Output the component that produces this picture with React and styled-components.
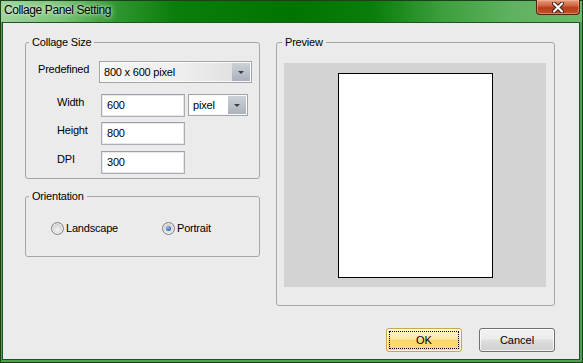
import React from 'react';
import styled, { createGlobalStyle } from 'styled-components';

const Global = createGlobalStyle`
  html, body { margin: 0; padding: 0; background: #fff; }
  body {
    width: 583px; height: 363px; overflow: hidden;
    font-family: "Liberation Sans", Arial, sans-serif;
  }
  * { box-sizing: border-box; }
`;

const Window = styled.div`
  width: 583px;
  height: 363px;
  display: flex;
  flex-direction: column;
  background: #4e9f4e;
  border: 1px solid #1c3f1c;
`;

const TitleBar = styled.div`
  height: 21px;
  flex: none;
  display: flex;
  align-items: flex-start;
  background: linear-gradient(90deg, #9ed39b 0%, #7cc479 10%, #2f962f 20%, #0b7d0b 30%, #007400 50%, #0a7d0a 64%, #3d9f3d 76%, #5fb25f 88%, #6ab96a 100%);
`;

const TitleText = styled.div`
  padding: 2px 0 0 3px;
  font-size: 12px;
  line-height: 15px;
  letter-spacing: -0.4px;
  color: #000;
  text-shadow: 0 0 6px rgba(225, 245, 225, 0.95), 0 0 3px rgba(225, 245, 225, 0.9);
`;

const CloseButton = styled.div`
  margin-left: auto;
  margin-right: 2px;
  margin-top: -1px;
  width: 44px;
  height: 15px;
  border: 1px solid #4f2417;
  border-top: none;
  border-radius: 0 0 4px 4px;
  background: linear-gradient(#e59d80 0%, #d0663f 40%, #b93d18 55%, #c2512c 100%);
  box-shadow: inset 0 0 0 1px rgba(255, 200, 170, 0.45);
  display: flex;
  align-items: center;
  justify-content: center;
`;

const Client = styled.div`
  flex: 1;
  margin: 0 2px 2px 1px;
  border: 1px solid #23502a;
  background: #ebebeb;
  display: flex;
  flex-direction: column;
  padding: 19px 24px 0 22px;
  font-size: 11px;
  letter-spacing: -0.2px;
  color: #000;
`;

const Body = styled.div`
  display: flex;
  gap: 16px;
`;

const LeftColumn = styled.div`
  width: 235px;
  display: flex;
  flex-direction: column;
  gap: 17px;
`;

const GroupBox = styled.div`
  position: relative;
  width: ${p => p.$w}px;
  height: ${p => p.$h}px;
  border: 1px solid #a6a6a6;
  border-radius: 3px;
  padding: ${p => p.$pad};
`;

const Legend = styled.span`
  position: absolute;
  top: -7px;
  left: ${p => p.$left || 3}px;
  padding: 0 3px;
  background: #ebebeb;
  line-height: 13px;
`;

const Row = styled.div`
  display: flex;
  align-items: flex-start;
  padding-left: ${p => p.$indent}px;
  margin-top: ${p => p.$mt || 0}px;
`;

const Label = styled.div`
  width: ${p => p.$w}px;
  padding-top: 2px;
  line-height: 13px;
`;

const TextBox = styled.div`
  width: 84px;
  height: 23px;
  border: 1px solid #abadb3;
  border-top-color: #9ea0a6;
  box-shadow: inset 0 0 0 1px #e3e9ef;
  background: #fff;
  padding-left: 5px;
  display: flex;
  align-items: center;
  line-height: 13px;
`;

const Combo = styled.div`
  width: ${p => p.$w}px;
  height: 22px;
  margin-left: ${p => p.$ml || 0}px;
  border: 1px solid #a4a4a4;
  box-shadow: inset 0 0 0 1px #fbfbfb;
  background: ${p => (p.$flat ? '#fff' : 'linear-gradient(90deg, #f7f7f7 0%, #eeeeee 55%, #dcdcdc 100%)')};
  display: flex;
  align-items: stretch;
  padding: 1px;
`;

const ComboText = styled.div`
  flex: 1;
  display: flex;
  align-items: center;
  padding-left: ${p => p.$pl}px;
  line-height: 13px;
`;

const ComboArrow = styled.div`
  width: 18px;
  background: linear-gradient(#ccd1d8 0%, #bcc2ca 50%, #aab1ba 100%);
  display: flex;
  align-items: center;
  justify-content: center;
  &::after {
    content: '';
    width: 0;
    height: 0;
    border-left: 3px solid transparent;
    border-right: 3px solid transparent;
    border-top: 3px solid #3c3c3c;
  }
`;

const RadioRow = styled.div`
  display: flex;
  padding-left: 25px;
`;

const RadioItem = styled.label`
  width: ${p => p.$w}px;
  display: flex;
  align-items: center;
  gap: 2px;
  line-height: 13px;
`;

const RadioCircle = styled.span`
  width: 13px;
  height: 13px;
  border-radius: 50%;
  border: 1px solid #7f8184;
  background: radial-gradient(circle at 50% 60%, #f4f4f4 0%, #dadada 45%, #bcbcbc 100%);
  box-shadow: inset 0 0 0 1px rgba(255, 255, 255, 0.6);
  display: flex;
  align-items: center;
  justify-content: center;
  &::after {
    content: '';
    width: 5px;
    height: 5px;
    border-radius: 50%;
    background: ${p => (p.$checked ? 'radial-gradient(circle at 40% 35%, #9cc3f0 0%, #3a6fb5 60%, #1c4a8a 100%)' : 'transparent')};
  }
`;

const Canvas = styled.div`
  width: 262px;
  height: 224px;
  background: #d3d3d3;
  display: flex;
  align-items: center;
  justify-content: center;
`;

const Page = styled.div`
  width: 155px;
  height: 205px;
  background: #fff;
  border: 1px solid #000;
`;

const ButtonRow = styled.div`
  display: flex;
  justify-content: flex-end;
  gap: 17px;
  margin-top: 22px;
`;

const Button = styled.button`
  position: relative;
  width: 76px;
  height: 24px;
  padding: 0;
  border-radius: 3px;
  font-family: "Liberation Sans", Arial, sans-serif;
  font-size: 11px;
  color: #000;
  border: 1px solid ${p => (p.$primary ? '#c9a54e' : '#707070')};
  background: ${p =>
    p.$primary
      ? 'linear-gradient(#fff5d3 0%, #fee8a6 45%, #fdd56a 52%, #fbdd80 100%)'
      : 'linear-gradient(#f3f3f3 0%, #ececec 45%, #dddddd 52%, #cfcfcf 100%)'};
  box-shadow: inset 0 0 0 1px rgba(255, 255, 255, 0.75);
  &::after {
    content: '';
    display: ${p => (p.$primary ? 'block' : 'none')};
    position: absolute;
    inset: 2px;
    border: 1px dotted #000;
  }
`;

function CloseGlyph() {
  return (
    <svg width="14" height="11" viewBox="0 0 14 11">
      <path d="M3 1.5 L11 9.5 M11 1.5 L3 9.5" stroke="#3a1a10" strokeWidth="4" strokeLinecap="round" />
      <path d="M3 1.5 L11 9.5 M11 1.5 L3 9.5" stroke="#fff" strokeWidth="2.2" strokeLinecap="round" />
    </svg>
  );
}

export default function App() {
  return (
    <>
      <Global />
      <Window>
        <TitleBar>
          <TitleText>Collage Panel Setting</TitleText>
          <CloseButton>
            <CloseGlyph />
          </CloseButton>
        </TitleBar>
        <Client>
          <Body>
            <LeftColumn>
              <GroupBox $w={235} $h={137} $pad="18px 0 0 0">
                <Legend>Collage Size</Legend>
                <Row $indent={12}>
                  <Label $w={61}>Predefined</Label>
                  <Combo $w={153}>
                    <ComboText $pl={3}>800 x 600 pixel</ComboText>
                    <ComboArrow />
                  </Combo>
                </Row>
                <Row $indent={31} $mt={11}>
                  <Label $w={44}>Width</Label>
                  <TextBox>600</TextBox>
                  <Combo $w={60} $ml={3} $flat>
                    <ComboText $pl={3}>pixel</ComboText>
                    <ComboArrow />
                  </Combo>
                </Row>
                <Row $indent={31} $mt={5}>
                  <Label $w={44}>Height</Label>
                  <TextBox>800</TextBox>
                </Row>
                <Row $indent={31} $mt={6}>
                  <Label $w={44}>DPI</Label>
                  <TextBox>300</TextBox>
                </Row>
              </GroupBox>
              <GroupBox $w={235} $h={61} $pad="25px 0 0 0">
                <Legend>Orientation</Legend>
                <RadioRow>
                  <RadioItem $w={111}>
                    <RadioCircle />
                    Landscape
                  </RadioItem>
                  <RadioItem $w={80}>
                    <RadioCircle $checked />
                    Portrait
                  </RadioItem>
                </RadioRow>
              </GroupBox>
            </LeftColumn>
            <GroupBox $w={279} $h={264} $pad="20px 0 0 7px">
              <Legend $left={5}>Preview</Legend>
              <Canvas>
                <Page />
              </Canvas>
            </GroupBox>
          </Body>
          <ButtonRow>
            <Button $primary>OK</Button>
            <Button>Cancel</Button>
          </ButtonRow>
        </Client>
      </Window>
    </>
  );
}
